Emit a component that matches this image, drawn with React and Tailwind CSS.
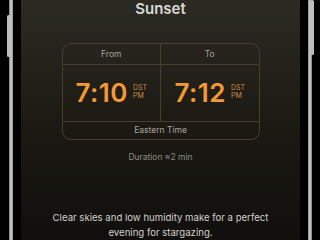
import React from 'react'

const font = { fontFamily: 'Inter, "Noto Sans", sans-serif' }

function TimeCell({ time, right }) {
  return (
    <div className={`flex-1 flex items-center justify-center ${right ? '' : 'border-r border-[#4a3e2b]'}`}>
      <span className="text-[26px] leading-none font-semibold text-[#f39a35] tracking-[0.5px]">{time}</span>
      <div className="ml-[5px] flex flex-col text-[7px] leading-[8px] text-[#c98d4c] -mt-[3px]">
        <span>DST</span>
        <span>PM</span>
      </div>
    </div>
  )
}

export default function App() {
  return (
    <div className="relative w-[320px] h-[240px] bg-black overflow-hidden flex" style={font}>
      {/* left frame */}
      <div className="w-[9px] bg-black" />
      <div className="w-[4px] bg-gradient-to-r from-[#7a7a7a] via-[#d6d6d6] to-[#8a8a8a]" />
      <div className="w-[8px] bg-black" />

      {/* screen */}
      <div className="flex-1 flex flex-col bg-gradient-to-b from-[#2c2b22] via-[#1d1a14] to-[#110f0c]">
        <div className="pt-[1px] h-[17px] text-center text-[15px] leading-[16px] font-semibold text-[#d9d9d6]">Sunset</div>

        <div className="mt-[26px] mx-auto w-[198px] h-[100px] rounded-[9px] border border-[#4a3e2b] flex flex-col">
          <div className="h-[21px] flex border-b border-[#4a3e2b] text-[8.5px] text-[#a8a49c]">
            <div className="flex-1 flex items-center justify-center border-r border-[#4a3e2b]">From</div>
            <div className="flex-1 flex items-center justify-center">To</div>
          </div>
          <div className="h-[57px] flex border-b border-[#4a3e2b]">
            <TimeCell time="7:10" />
            <TimeCell time="7:12" right />
          </div>
          <div className="flex-1 flex items-center justify-center text-[8.5px] text-[#a8a49c]">Eastern Time</div>
        </div>

        <div className="mt-[11px] text-center text-[8.5px] leading-[12px] text-[#8e8b85]">Duration ≈2 min</div>

        <div className="mt-[47px] text-center text-[9.6px] leading-[15px] text-[#d2d0cc]">
          Clear skies and low humidity make for a perfect
          <br />
          evening for stargazing.
        </div>
      </div>

      {/* right frame */}
      <div className="w-[8px] bg-black" />
      <div className="w-[4px] bg-gradient-to-r from-[#8a8a8a] via-[#d6d6d6] to-[#7a7a7a]" />
      <div className="w-[8px] bg-black" />

      {/* side buttons */}
      <div className="absolute left-[7px] top-[15px] w-[3px] h-[42px] rounded-sm bg-[#bdbdbd]" />
      <div className="absolute left-[311px] top-0 w-[3px] h-[55px] rounded-sm bg-[#bdbdbd]" />
    </div>
  )
}
